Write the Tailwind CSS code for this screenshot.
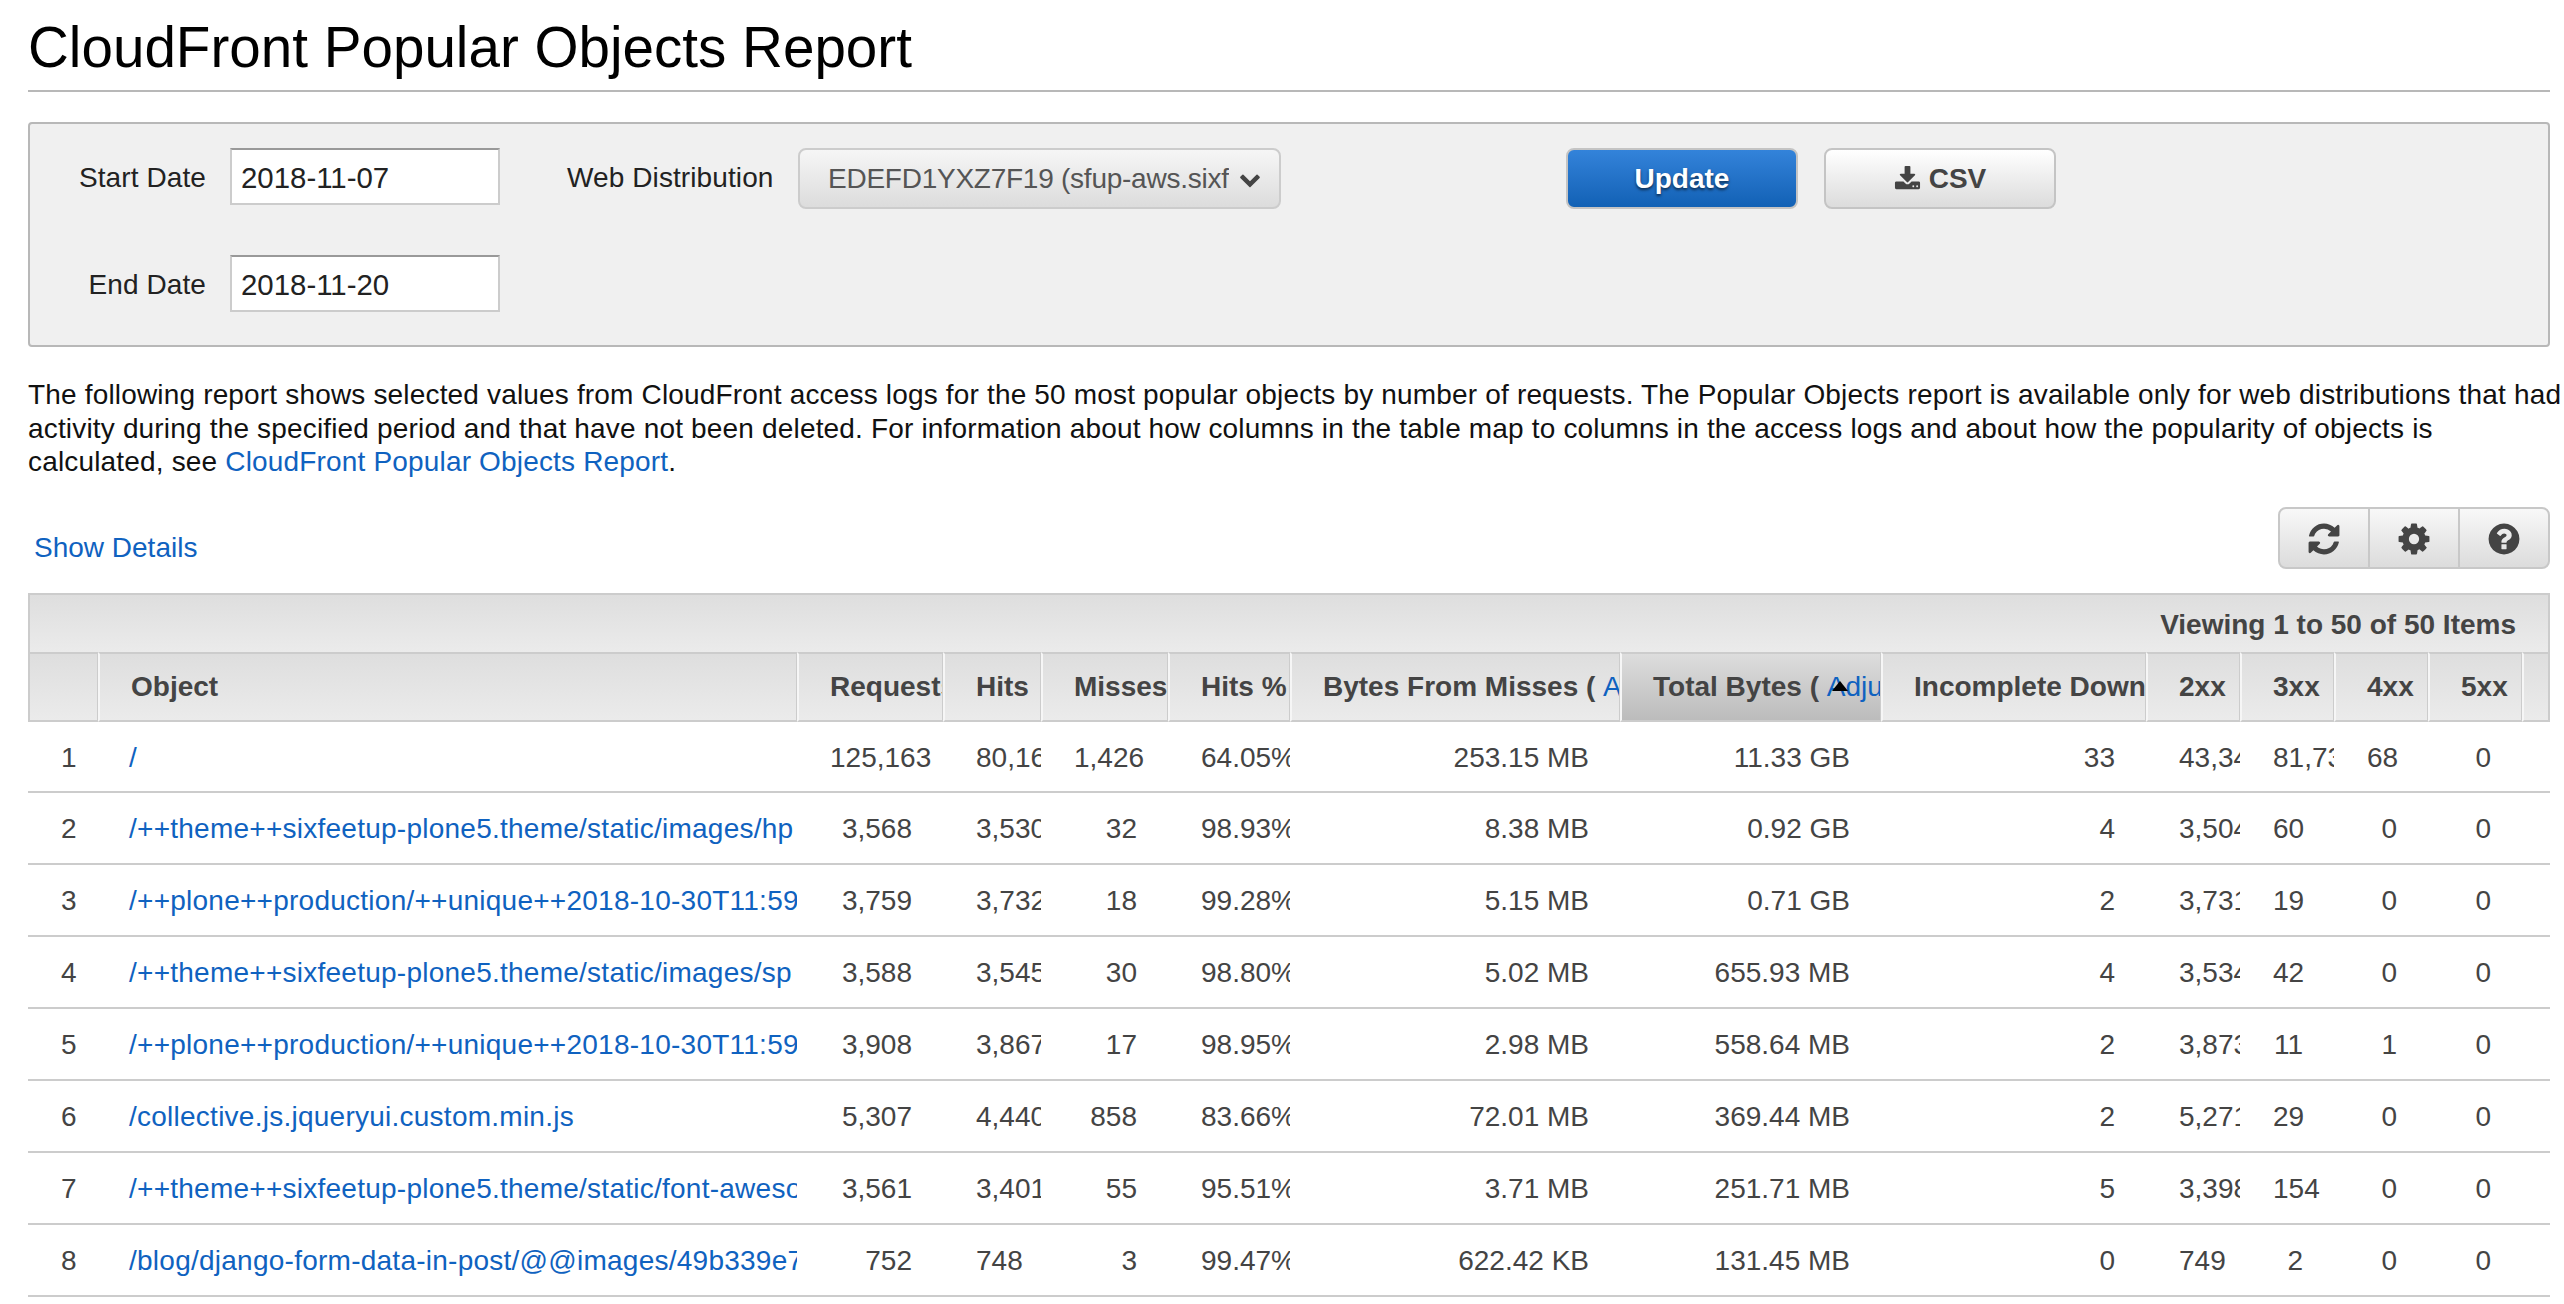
<!DOCTYPE html>
<html lang="en">
<head>
    <meta charset="UTF-8">
    <title>CloudFront Popular Objects Report</title>
    <script src="https://cdn.jsdelivr.net/npm/@tailwindcss/browser@4"></script>
</head>
<body class="bg-white h-[1304px] overflow-hidden font-['Liberation_Sans',Arial,sans-serif] text-[28px] text-[#222]">
<div class="w-[2564px] pl-[28px] pr-[14px]">

    <!-- Title -->
    <h1 class="h-[92px] pt-[18px] border-b-2 border-[#b8b8b8] text-[56.6px] leading-[60px] text-black">CloudFront Popular Objects Report</h1>

    <!-- Filters -->
    <div class="mt-[30px] h-[225px] flex items-start pt-[24px] bg-[#f0f0f0] border-2 border-[#b8b8b8] rounded-[4px]">
        <div class="flex flex-col gap-[50px]">
            <div class="flex items-center gap-[24px]">
                <label class="w-[176px] pt-[2px] text-right tracking-[0.1px]">Start Date</label>
                <input value="2018-11-07" class="w-[270px] h-[57px] px-[9px] pt-[2px] bg-white border-2 border-[#ccc] border-t-[#999] text-[#222] text-[29.4px]">
            </div>
            <div class="flex items-center gap-[24px]">
                <label class="w-[176px] pt-[2px] text-right tracking-[0.1px]">End Date</label>
                <input value="2018-11-20" class="w-[270px] h-[57px] px-[9px] pt-[2px] bg-white border-2 border-[#ccc] border-t-[#999] text-[#222] text-[29.4px]">
            </div>
        </div>
        <label class="ml-[67px] pt-[1px] h-[57px] w-[206px] leading-[57px] whitespace-nowrap tracking-[0.1px]">Web Distribution</label>
        <div class="ml-[25px] w-[483px] h-[61px] flex items-center pl-[28px] pr-[18px] border-2 border-[#ccc] rounded-[8px] bg-gradient-to-b from-[#f6f6f6] to-[#dcdcdc] text-[#555]">
            <span class="w-[402px] overflow-hidden whitespace-nowrap tracking-[-0.25px]">EDEFD1YXZ7F19 (sfup-aws.sixfeetup.com)</span>
            <svg class="ml-[10px] w-[22px] h-[22px] fill-[#444]" viewBox="0 0 1792 1792"><path d="M1683 808l-742 741q-19 19-45 19t-45-19l-742-741q-19-19-19-45.5t19-45.5l166-165q19-19 45-19t45 19l531 531 531-531q19-19 45-19t45 19l166 165q19 19 19 45.5t-19 45.5z"/></svg>
        </div>
        <button class="ml-[285px] w-[232px] h-[61px] pt-[1px] border-2 border-[#c4c4c4] rounded-[8px] bg-gradient-to-b from-[#3383da] to-[#1161b5] text-white font-bold [text-shadow:0_2px_3px_rgba(0,0,0,0.6)]">Update</button>
        <button class="ml-[26px] w-[232px] h-[61px] pt-[1px] flex items-center justify-center gap-[8px] border-2 border-[#c4c4c4] rounded-[8px] bg-gradient-to-b from-white to-[#dcdcdc] text-[#444] font-bold">
            <svg class="w-[27px] h-[27px] fill-[#444]" viewBox="0 0 1792 1792"><path d="M1344 1344q0-26-19-45t-45-19-45 19-19 45 19 45 45 19 45-19 19-45zm256 0q0-26-19-45t-45-19-45 19-19 45 19 45 45 19 45-19 19-45zm128-224v320q0 40-28 68t-68 28h-1472q-40 0-68-28t-28-68v-320q0-40 28-68t68-28h465l135 136q58 56 136 56t136-56l136-136h464q40 0 68 28t28 68zm-325-569q17 41-14 70l-448 448q-18 19-45 19t-45-19l-448-448q-31-29-14-70 17-39 59-39h256v-448q0-26 19-45t45-19h256q26 0 45 19t19 45v448h256q42 0 59 39z"/></svg>
            CSV
        </button>
    </div>

    <!-- Description -->
    <p class="mt-[31px] w-[2536px] leading-[33.5px] whitespace-nowrap text-[#111] tracking-[0.17px]">
        The following report shows selected values from CloudFront access logs for the 50 most popular objects by number of requests. The Popular Objects report is available only for web distributions that had<br>
        activity during the specified period and that have not been deleted. For information about how columns in the table map to columns in the access logs and about how the popularity of objects is<br>
        calculated, see <a href="#" class="text-[#0f62c0]">CloudFront Popular Objects Report</a>.
    </p>

    <!-- Details link and table tools -->
    <div class="mt-[28px] flex items-center justify-between">
        <a href="#" class="ml-[6px] mt-[20px] text-[#0f62c0]">Show Details</a>
        <div class="w-[272px] flex h-[62px] border-2 border-[#c8c8c8] rounded-[8px] bg-gradient-to-b from-[#f8f8f8] to-[#dcdcdc]">
            <button class="w-[90px] pt-[2px] flex items-center justify-center border-r-2 border-[#c8c8c8]">
                <svg class="w-[36px] h-[36px] fill-[#444]" viewBox="0 0 1792 1792"><path d="M1639 1056q0 5-1 7-64 268-268 434.5t-478 166.5q-146 0-282.5-55t-243.5-157l-129 129q-19 19-45 19t-45-19-19-45v-448q0-26 19-45t45-19h448q26 0 45 19t19 45-19 45l-137 137q71 66 161 102t187 36q134 0 250-65t186-179q11-17 53-117 8-23 30-23h192q13 0 22.5 9.5t9.5 22.5zm25-800v448q0 26-19 45t-45 19h-448q-26 0-45-19t-19-45 19-45l138-138q-148-137-349-137-134 0-250 65t-186 179q-11 17-53 117-8 23-30 23h-199q-13 0-22.5-9.5t-9.5-22.5v-7q65-268 270-434.5t480-166.5q146 0 284 55.5t245 156.5l130-129q19-19 45-19t45 19 19 45z"/></svg>
            </button>
            <button class="w-[90px] pt-[2px] flex items-center justify-center border-r-2 border-[#c8c8c8]">
                <svg class="w-[36px] h-[36px] fill-[#444]" viewBox="0 0 1792 1792"><path d="M1152 896q0-106-75-181t-181-75-181 75-75 181 75 181 181 75 181-75 75-181zm512-109v222q0 12-8 23t-20 13l-185 28q-19 54-39 91 35 50 107 138 10 12 10 25t-9 23q-27 37-99 108t-94 71q-12 0-26-9l-138-108q-44 23-91 38-16 136-29 186-7 28-36 28h-222q-14 0-24.5-8.5t-11.5-21.5l-28-184q-49-16-90-37l-141 107q-10 9-25 9-14 0-25-11-126-114-165-168-7-10-7-23 0-12 8-23 15-21 51-66.5t54-70.5q-27-50-41-99l-183-27q-13-2-21-12.5t-8-23.5v-222q0-12 8-23t19-13l186-28q14-46 39-92-40-57-107-138-10-12-10-24 0-10 9-23 26-36 98.5-107.5t94.5-71.5q13 0 26 10l138 107q44-23 91-38 16-136 29-186 7-28 36-28h222q14 0 24.5 8.5t11.5 21.5l28 184q49 16 90 37l142-107q9-9 24-9 13 0 25 10 129 119 165 170 7 8 7 22 0 12-8 23-15 21-51 66.5t-54 70.5q26 50 41 98l183 28q13 2 21 12.5t8 23.5z"/></svg>
            </button>
            <button class="flex-1 pt-[2px] flex items-center justify-center">
                <svg class="w-[36px] h-[36px] fill-[#444]" viewBox="0 0 1792 1792"><path d="M1024 1376v-192q0-14-9-23t-23-9h-192q-14 0-23 9t-9 23v192q0 14 9 23t23 9h192q14 0 23-9t9-23zm256-672q0-88-55.5-163t-138.5-116-170-41q-243 0-371 213-15 24 8 42l132 100q7 6 19 6 16 0 25-12 53-68 86-92 34-24 86-24 48 0 85.5 26t37.5 59q0 38-20 61t-68 45q-63 28-115.5 86.5t-52.5 125.5v36q0 14 9 23t23 9h192q14 0 23-9t9-23q0-19 21.5-49.5t54.5-49.5q32-18 49-28.5t46-35 44.5-48 28-60.5 12.5-81zm384 192q0 209-103 385.5t-279.5 279.5-385.5 103-385.5-103-279.5-279.5-103-385.5 103-385.5 279.5-279.5 385.5-103 385.5 103 279.5 279.5 103 385.5z"/></svg>
            </button>
        </div>
    </div>

    <!-- Table toolbar -->
    <div class="mt-[24px] h-[59px] flex items-center justify-end pt-[3px] pr-[32px] border-2 border-b-0 border-[#ccc] bg-gradient-to-b from-[#dedede] to-[#ebebeb] font-bold text-[#444]">Viewing 1 to 50 of 50 Items</div>

    <!-- Report table -->
    <table class="table-fixed border-separate border-spacing-0 w-[2522px] text-[#444]">
        <colgroup>
            <col class="w-[70px]"><col class="w-[699px]"><col class="w-[146px]"><col class="w-[98px]"><col class="w-[127px]"><col class="w-[122px]"><col class="w-[330px]"><col class="w-[261px]"><col class="w-[265px]"><col class="w-[94px]"><col class="w-[94px]"><col class="w-[94px]"><col class="w-[94px]"><col class="w-[28px]">
        </colgroup>
        <thead class="[&_th]:h-[70px] [&_th]:pl-[31px] [&_th]:pr-0 [&_th]:text-left [&_th]:font-bold [&_th]:overflow-hidden [&_th]:whitespace-nowrap [&_th]:border-t-2 [&_th]:border-b-2 [&_th]:border-r [&_th]:border-l-2 [&_th]:border-t-[#ccc] [&_th]:border-b-[#ccc] [&_th]:border-r-[#ccc] [&_th]:border-l-[#f6f6f6] [&_th:first-child]:border-l-[#ccc] [&_th:last-child]:border-r-2 [&_th]:bg-gradient-to-b [&_th]:from-[#dedede] [&_th]:to-[#ebebeb]">
            <tr>
                <th></th>
                <th>Object</th>
                <th>Requests</th>
                <th>Hits</th>
                <th>Misses</th>
                <th>Hits %</th>
                <th>Bytes From Misses ( <a href="#" class="font-normal text-[#0f62c0]">Adjusted</a> )</th>
                <th class="relative !from-[#dddddd] !to-[#bcbcbc]">Total Bytes ( <a href="#" class="font-normal text-[#0f62c0]">Adjusted</a> )
                    <span class="absolute left-[210px] top-[27px] w-0 h-0 border-x-[8px] border-x-transparent border-b-[10px] border-b-black"></span>
                </th>
                <th>Incomplete Downloads</th>
                <th>2xx</th>
                <th>3xx</th>
                <th>4xx</th>
                <th>5xx</th>
                <th></th>
            </tr>
        </thead>
        <tbody class="[&_tr]:h-[72px] [&_tr:first-child]:h-[71px] [&_td]:pt-[3px] [&_td]:pl-[33px] [&_td]:pr-[31px] [&_td]:text-right [&_td]:overflow-hidden [&_td]:whitespace-nowrap [&_td]:border-b-2 [&_td]:border-[#ccc] [&_td:nth-child(2)]:pl-[31px] [&_td:nth-child(2)]:pr-0 [&_td:nth-child(2)]:text-left [&_a]:text-[#0f62c0] [&_a]:tracking-[0.25px]">
            <tr><td>1</td><td><a href="#">/</a></td><td>125,163</td><td>80,166</td><td>1,426</td><td>64.05%</td><td>253.15 MB</td><td>11.33 GB</td><td>33</td><td>43,342</td><td>81,736</td><td>68</td><td>0</td><td class="!p-0"></td></tr>
            <tr><td>2</td><td><a href="#">/++theme++sixfeetup-plone5.theme/static/images/hp</a></td><td>3,568</td><td>3,530</td><td>32</td><td>98.93%</td><td>8.38 MB</td><td>0.92 GB</td><td>4</td><td>3,504</td><td>60</td><td>0</td><td>0</td><td class="!p-0"></td></tr>
            <tr><td>3</td><td><a href="#">/++plone++production/++unique++2018-10-30T11:59</a></td><td>3,759</td><td>3,732</td><td>18</td><td>99.28%</td><td>5.15 MB</td><td>0.71 GB</td><td>2</td><td>3,731</td><td>19</td><td>0</td><td>0</td><td class="!p-0"></td></tr>
            <tr><td>4</td><td><a href="#">/++theme++sixfeetup-plone5.theme/static/images/sp</a></td><td>3,588</td><td>3,545</td><td>30</td><td>98.80%</td><td>5.02 MB</td><td>655.93 MB</td><td>4</td><td>3,534</td><td>42</td><td>0</td><td>0</td><td class="!p-0"></td></tr>
            <tr><td>5</td><td><a href="#">/++plone++production/++unique++2018-10-30T11:59</a></td><td>3,908</td><td>3,867</td><td>17</td><td>98.95%</td><td>2.98 MB</td><td>558.64 MB</td><td>2</td><td>3,873</td><td>11</td><td>1</td><td>0</td><td class="!p-0"></td></tr>
            <tr><td>6</td><td><a href="#">/collective.js.jqueryui.custom.min.js</a></td><td>5,307</td><td>4,440</td><td>858</td><td>83.66%</td><td>72.01 MB</td><td>369.44 MB</td><td>2</td><td>5,271</td><td>29</td><td>0</td><td>0</td><td class="!p-0"></td></tr>
            <tr><td>7</td><td><a href="#">/++theme++sixfeetup-plone5.theme/static/font-aweso</a></td><td>3,561</td><td>3,401</td><td>55</td><td>95.51%</td><td>3.71 MB</td><td>251.71 MB</td><td>5</td><td>3,398</td><td>154</td><td>0</td><td>0</td><td class="!p-0"></td></tr>
            <tr><td>8</td><td><a href="#">/blog/django-form-data-in-post/@@images/49b339e7</a></td><td>752</td><td>748</td><td>3</td><td>99.47%</td><td>622.42 KB</td><td>131.45 MB</td><td>0</td><td>749</td><td>2</td><td>0</td><td>0</td><td class="!p-0"></td></tr>
        </tbody>
    </table>

</div>
</body>
</html>
